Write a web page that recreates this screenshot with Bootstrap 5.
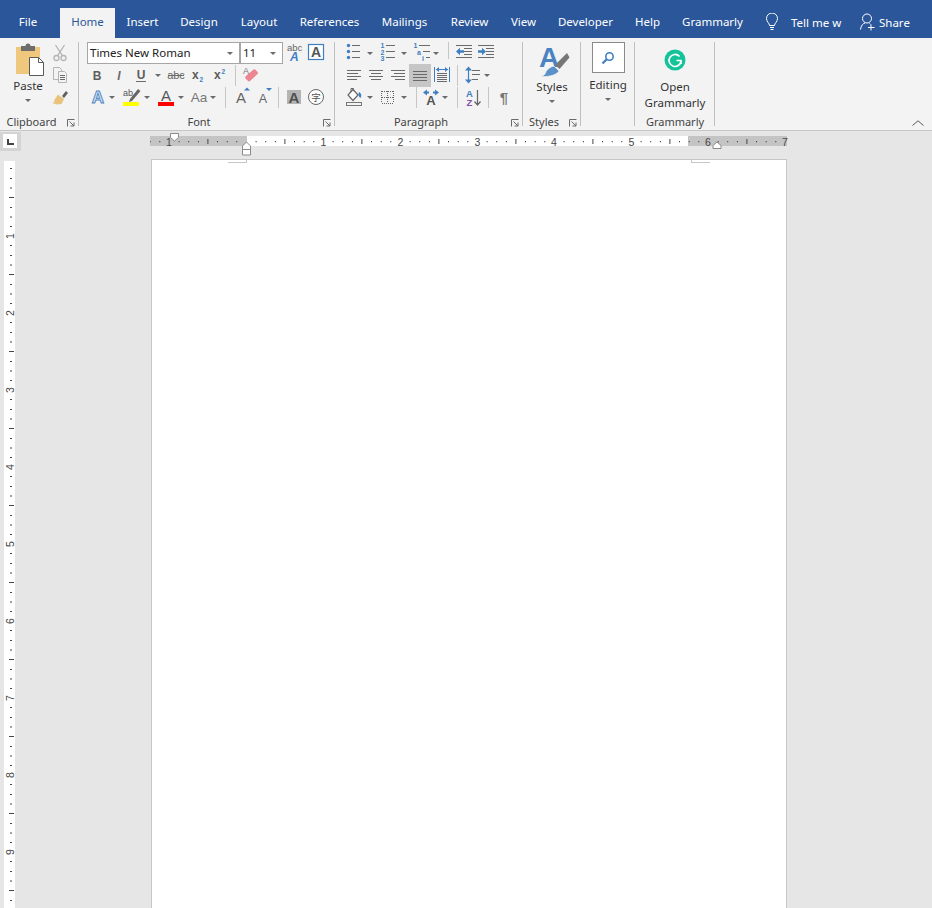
<!DOCTYPE html>
<html lang="en">
<head>
<meta charset="utf-8">
<title>Word</title>
<link href="https://cdn.jsdelivr.net/npm/bootstrap@5.3.0/dist/css/bootstrap.min.css" rel="stylesheet">
<style>
html,body{height:908px;overflow:hidden}
body{font-family:"Noto Sans","Liberation Sans",sans-serif;font-size:11.5px;color:#444;background:#e6e6e6}
svg{display:block;flex:none}
svg text{font-family:"Liberation Sans",sans-serif}
.titlebar{height:38px;background:#2b579a;color:#fff;align-items:flex-end}
.titlebar .nav-link{padding:0;height:30px;line-height:28px;text-align:center;color:#fff;font-size:11.5px}
.titlebar .nav-link.active{background:#f3f3f3;color:#2b579a}
.t-file{width:56px;margin-right:4px}.t-home{width:55px}.t-insert{width:55px}.t-design{width:58px}.t-layout{width:62px}.t-refs{width:79px}.t-mail{width:71px}.t-review{width:59px}.t-view{width:49px}.t-dev{width:75px}.t-help{width:49px}.t-gram{width:81px}
.tb-tools{height:30px;margin-left:12px;color:#fff;line-height:28px}
.tb-bulb,.tb-user{margin-top:-2px}
.tb-tell{margin-left:12px;width:49px;white-space:nowrap}
.tb-user{margin-left:20px}
.tb-share{margin-left:4px}
.ribbon{height:93px;padding-top:4px;background:#f3f3f3;border-bottom:1px solid #c6c6c6}
.grp{height:88px;flex:none;background:linear-gradient(#c0c0c0,#c0c0c0) right top/1px 84px no-repeat}
.g-clip{width:79px}.g-font{width:256px;padding-left:7px}.g-para{width:188px;padding-left:8px}.g-styles{width:58px}.g-edit{width:54px}.g-gram{width:80px}
.g-font .glabel{margin-left:-7px}.g-para .glabel{margin-left:-8px}
.body-area{height:70px}
.glabel{height:15px;line-height:14px;flex:none;font-size:11px}
.launch{width:16px;flex:none}
.rrow{height:22px;flex:none}
.cl{height:22px;flex:none;display:flex;align-items:center;justify-content:center}
.c22{width:22px}.c14{width:14px}.c12{width:12px}.c10{width:10px}.c8{width:8px}.c6{width:6px}
.ml1{margin-left:1px}.ml2{margin-left:2px}.ml3{margin-left:3px}.ml4{margin-left:4px}.ml5{margin-left:5px}.ml6{margin-left:6px}.ml9{margin-left:9px}
.dd{width:0;height:0;border:solid transparent;border-width:3px 3px 0;border-top-color:#6a6a6a;flex:none}
.vsep{width:1px;flex:none;background:#c6c6c6;margin-top:1px;height:21px}
.vsep-s{height:17px;margin-top:0;align-self:flex-start}
.is22{width:22px;height:22px}
.ln{stroke:#6a6a6a;stroke-width:1;fill:none;shape-rendering:crispEdges}
.combo{height:22px;background:#fff;border:1px solid #a6a6a6;font-size:11.5px;color:#222;line-height:20px;padding:0 6px 0 2px;flex:none;margin-top:0}
.combo-name{width:153px;margin-left:1px}
.combo-size{width:43px}
.hl{background:#c6c6c6;height:23px;align-self:flex-start}
.paste-col{width:42px;margin-left:7px}
.btn-text{line-height:16px;color:#333;font-size:11.5px}
.bt-paste{margin-top:1px}
.dd-big{margin-top:5px}
.editbox{width:33px;height:31px;background:#fff;border:1px solid #8a8a8a}
.workspace{height:777px;overflow:hidden;background:#e6e6e6}
.rulerrow{height:28px}
.tabsel{width:21px;height:19px;margin-top:1px;background:#d4d4d4;flex:none;padding:2px 4px 2px 3px}
.tabsel-in{width:14px;height:14px;background:#fff;padding:5px 0 0 4px}
.hruler{margin-left:129px}
.vruler{margin-left:4px}
.page{margin-left:136px;width:636px;height:760px;background:#fff;border:1px solid #c6c6c6;border-bottom:0;flex:none}
.crop-l{margin-left:76px;width:19px;height:3px;border:solid #c6c6c6;border-width:0 1px 1px 0}
.crop-r{margin-right:76px;width:19px;height:3px;border:solid #c6c6c6;border-width:0 0 1px 1px}
.collapse-ch{margin:0 8px 4px auto;align-self:flex-end}
</style>
</head>
<body>
<div class="d-flex flex-column">
  <div class="titlebar d-flex">
    <ul class="nav flex-nowrap">
      <li class="nav-item"><a class="nav-link t-file" href="#">File</a></li>
      <li class="nav-item"><a class="nav-link active t-home" href="#">Home</a></li>
      <li class="nav-item"><a class="nav-link t-insert" href="#">Insert</a></li>
      <li class="nav-item"><a class="nav-link t-design" href="#">Design</a></li>
      <li class="nav-item"><a class="nav-link t-layout" href="#">Layout</a></li>
      <li class="nav-item"><a class="nav-link t-refs" href="#">References</a></li>
      <li class="nav-item"><a class="nav-link t-mail" href="#">Mailings</a></li>
      <li class="nav-item"><a class="nav-link t-review" href="#">Review</a></li>
      <li class="nav-item"><a class="nav-link t-view" href="#">View</a></li>
      <li class="nav-item"><a class="nav-link t-dev" href="#">Developer</a></li>
      <li class="nav-item"><a class="nav-link t-help" href="#">Help</a></li>
      <li class="nav-item"><a class="nav-link t-gram" href="#">Grammarly</a></li>
    </ul>
    <div class="tb-tools d-flex align-items-center">
      <svg class="tb-bulb" width="14" height="18" viewBox="0 0 14 18"><path d="M4.5 12.5C4.5 10 1.5 9 1.5 5.5a5.5 5.5 0 0 1 11 0C12.500 9 9.500 10 9.500 12.500ZM5 14.500h4M5.500 16.500h3" fill="none" stroke="#fff" stroke-width="1"/></svg>
      <span class="tb-tell">Tell me w</span>
      <svg class="tb-user" width="15" height="18" viewBox="0 0 15 18"><circle cx="7" cy="5.500" r="4.500" fill="none" stroke="#fff"/><path d="M.5 16.500C1 12.500 3 10.500 5 10M9.500 10.500l1 .8M11 11.500v6M8 14.500h6.500" fill="none" stroke="#fff"/></svg>
      <span class="tb-share">Share</span>
    </div>
  </div>

  <div class="ribbon d-flex">
    <!-- Clipboard -->
    <section class="grp g-clip d-flex flex-column">
      <div class="body-area d-flex flex-grow-1">
        <div class="paste-col d-flex flex-column align-items-center">
          <svg width="32" height="35" viewBox="-2 0 32 35"><rect x="2" y="5" width="24" height="27" fill="#efc77d"/><path d="M7 4h4.500a2.500 2.500 0 0 1 5 0H21v5H7Z" fill="#6d6d6d"/><path d="M15.500 15.500h9l5 5v13h-14Z" fill="#fff" stroke="#5a5a5a"/><path d="M24.500 15.500v5h5" fill="none" stroke="#5a5a5a"/></svg>
          <span class="btn-text bt-paste">Paste</span>
          <span class="dd dd-big"></span>
        </div>
        <div class="d-flex flex-column">
          <div class="cl c22"><svg width="18" height="18" viewBox="0 0 18 18"><g fill="none" stroke="#b4b4b4" stroke-width="1.300"><circle cx="5.500" cy="14" r="2.500"/><circle cx="12.500" cy="14" r="2.500"/><path d="M6.500 11.800 13.500 1M11.500 11.800 4.500 1"/></g></svg></div>
          <div class="cl c22"><svg width="18" height="18" viewBox="0 0 18 18"><g fill="#f3f3f3" stroke="#b4b4b4"><path d="M2.500 1.500h6l2 2v10h-8Z"/><path d="M7.500 5.500h6l2 2v9h-8Z"/></g><path class="ln" d="M9 9.500h5M9 11.500h5M9 13.500h5"/></svg></div>
          <div class="cl c22"><svg width="18" height="18" viewBox="0 0 18 18"><path d="M11 8 15 3l2 2-4 5Z" fill="#5f5f5f"/><path d="M7 6.500 13 11l-2.500 5-5 .5-4-1.500 3-2-2 .2Z" fill="#e9c27c"/></svg></div>
        </div>
      </div>
      <div class="glabel d-flex"><span class="flex-grow-1 text-center">Clipboard</span><span class="launch"><svg width="8" height="8" viewBox="0 0 8 8" class="mt-1 ms-1"><path d="M.5 7.500V.5h7M2.500 2.500l4.500 4.500M3.500 7h3.500V3.500" fill="none" stroke="#6a6a6a"/></svg></span></div>
    </section>

    <!-- Font -->
    <section class="grp g-font d-flex flex-column">
      <div class="body-area flex-grow-1">
        <div class="rrow d-flex">
          <div class="combo combo-name d-flex align-items-center justify-content-between"><span>Times New Roman</span><span class="dd"></span></div>
          <div class="combo combo-size d-flex align-items-center justify-content-between"><span>11</span><span class="dd"></span></div>
          <div class="cl c22"><svg class="is22" viewBox="0 0 22 22"><text x="4" y="9" font-size="9.500" fill="#666">abc</text><text x="7" y="18.500" font-size="12" font-weight="700" font-style="italic" fill="#3f7fc1">A</text></svg></div>
          <div class="cl c22"><svg class="is22" viewBox="0 0 22 22"><rect x="3.500" y="2.500" width="15" height="15" fill="#fff" stroke="#3f7fc1" stroke-width="1.200"/><text x="11" y="15" font-size="14" font-weight="700" fill="#555" text-anchor="middle">A</text></svg></div>
        </div>
        <div class="rrow d-flex">
          <div class="cl c22"><svg class="is22" viewBox="0 0 22 22"><text x="11" y="15.500" font-size="12" font-weight="700" fill="#5c5c5c" text-anchor="middle">B</text></svg></div>
          <div class="cl c22"><svg class="is22" viewBox="0 0 22 22"><text x="11" y="15.500" font-size="12" font-style="italic" font-weight="700" fill="#6c6c6c" text-anchor="middle">I</text></svg></div>
          <div class="cl c22"><svg class="is22" viewBox="0 0 22 22"><text x="11" y="14.500" font-size="12" font-weight="700" fill="#5c5c5c" text-anchor="middle">U</text><path class="ln" d="M6 17.500h10"/></svg></div>
          <div class="cl c12"><span class="dd"></span></div>
          <div class="cl c22 ml1"><svg class="is22" viewBox="0 0 22 22"><text x="11" y="15" font-size="11" fill="#666" text-anchor="middle">abc</text><path class="ln" d="M3 11.500h16"/></svg></div>
          <div class="cl c22"><svg class="is22" viewBox="0 0 22 22"><text x="5" y="15" font-size="12" font-weight="700" fill="#5c5c5c">x</text><text x="12.500" y="18" font-size="6.500" font-weight="700" fill="#3f7fc1">2</text></svg></div>
          <div class="cl c22"><svg class="is22" viewBox="0 0 22 22"><text x="5" y="15" font-size="12" font-weight="700" fill="#5c5c5c">x</text><text x="12.500" y="9.500" font-size="6.500" font-weight="700" fill="#3f7fc1">2</text></svg></div>
          <span class="vsep ml4"></span>
          <div class="cl c22 ml3"><svg class="is22" viewBox="0 0 22 22"><text x="4" y="10" font-size="9" fill="#777">A</text><path d="M7 12 14.500 5.500a1.500 1.500 0 0 1 2 .2l2 2.300a1.500 1.500 0 0 1 0 2L11 17a1.500 1.500 0 0 1-2 0L7 15a2 2 0 0 1 0-3Z" fill="#ea8591"/></svg></div>
        </div>
        <div class="rrow d-flex">
          <div class="cl c22 ml1"><svg class="is22" viewBox="0 0 22 22"><text x="11" y="17" font-size="17" font-weight="700" fill="#dbe8f5" stroke="#4a83c2" stroke-width=".9" text-anchor="middle">A</text></svg></div>
          <div class="cl c6"><span class="dd"></span></div>
          <div class="cl c22 ml5"><svg class="is22" viewBox="0 0 22 22"><text x="3" y="10" font-size="9" fill="#555">ab</text><path d="M10 13 18 3l2.500 2L12 15l-3 1Z" fill="#666"/><rect x="3" y="16" width="16" height="4" fill="#ffff00"/></svg></div>
          <div class="cl c10"><span class="dd"></span></div>
          <div class="cl c22 ml3"><svg class="is22" viewBox="0 0 22 22"><text x="11" y="15" font-size="15" fill="#555" text-anchor="middle">A</text><rect x="3" y="16" width="16" height="4" fill="#f00"/></svg></div>
          <div class="cl c8"><span class="dd"></span></div>
          <div class="cl c22 ml3"><svg class="is22" viewBox="0 0 22 22"><text x="11" y="16" font-size="13.500" fill="#777" text-anchor="middle">Aa</text></svg></div>
          <div class="cl c6"><span class="dd"></span></div>
          <span class="vsep ml9"></span>
          <div class="cl c22 ml5"><svg class="is22" viewBox="0 0 22 22"><text x="10" y="17" font-size="15" fill="#666" text-anchor="middle">A</text><path d="M13 4.500h6L16 1.500Z" fill="#3f7fc1"/></svg></div>
          <div class="cl c22"><svg class="is22" viewBox="0 0 22 22"><text x="10" y="17" font-size="12.500" fill="#666" text-anchor="middle">A</text><path d="M13 2h6L16 5Z" fill="#3f7fc1"/></svg></div>
          <span class="vsep ml3"></span>
          <div class="cl c22 ml4"><svg class="is22" viewBox="0 0 22 22"><rect x="4" y="4" width="14" height="14" fill="#b4b4b4"/><text x="11" y="16.500" font-size="15" font-weight="700" fill="#505050" text-anchor="middle">A</text></svg></div>
          <div class="cl c22"><svg class="is22" viewBox="0 0 22 22"><circle cx="11" cy="11" r="7.500" fill="#fff" stroke="#666"/><text x="11" y="14.500" style="font-family:'Noto Sans CJK SC',sans-serif" font-size="9.500" fill="#555" text-anchor="middle">字</text></svg></div>
        </div>
      </div>
      <div class="glabel d-flex"><span class="flex-grow-1 text-center">Font</span><span class="launch"><svg width="8" height="8" viewBox="0 0 8 8" class="mt-1 ms-1"><path d="M.5 7.500V.5h7M2.500 2.500l4.500 4.500M3.500 7h3.500V3.500" fill="none" stroke="#6a6a6a"/></svg></span></div>
    </section>

    <!-- Paragraph -->
    <section class="grp g-para d-flex flex-column">
      <div class="body-area flex-grow-1">
        <div class="rrow d-flex">
          <div class="cl c22"><svg class="is22" viewBox="0 0 22 22"><g fill="#3f7fc1"><circle cx="5.500" cy="3.500" r="1.700"/><circle cx="5.500" cy="9.500" r="1.700"/><circle cx="5.500" cy="15.500" r="1.700"/></g><path class="ln" d="M9 3.500h8M9 9.500h8M9 15.500h8"/></svg></div>
          <div class="cl c10"><span class="dd"></span></div>
          <div class="cl c22 ml2"><svg class="is22" viewBox="0 0 22 22"><g font-size="7" font-weight="700" fill="#3f7fc1" text-anchor="middle"><text x="5.500" y="6">1</text><text x="5.500" y="12.500">2</text><text x="5.500" y="19">3</text></g><path class="ln" d="M9 3.500h9M9 9.500h9M9 15.500h9"/></svg></div>
          <div class="cl c10"><span class="dd"></span></div>
          <div class="cl c22 ml2"><svg class="is22" viewBox="0 0 22 22"><g font-size="7" font-weight="700" fill="#3f7fc1" text-anchor="middle"><text x="4.500" y="6">1</text><text x="8" y="12.500">a</text><text x="12" y="19">i</text></g><path class="ln" d="M8 3.500h11M12 9.500h7M15 15.500h4"/></svg></div>
          <div class="cl c6"><span class="dd"></span></div>
          <span class="vsep vsep-s ml9"></span>
          <div class="cl c22 ml4"><svg class="is22" viewBox="0 0 22 22"><path class="ln" d="M3 3.500h16M11 6.500h8M11 9.500h8M11 12.500h8M3 15.500h16"/><path d="M3 9.500 7 5.800v2.500h4v2.500H7v2.500Z" fill="#3f7fc1"/></svg></div>
          <div class="cl c22"><svg class="is22" viewBox="0 0 22 22"><path class="ln" d="M3 3.500h16M11 6.500h8M11 9.500h8M11 12.500h8M3 15.500h16"/><path d="M11 9.500 7 5.800v2.500H3v2.500h4v2.500Z" fill="#3f7fc1"/></svg></div>
        </div>
        <div class="rrow d-flex">
          <div class="cl c22"><svg class="is22" viewBox="0 0 22 22"><path class="ln" d="M4 6.500h14M4 9.500h11M4 12.500h14M4 15.500h10"/></svg></div>
          <div class="cl c22"><svg class="is22" viewBox="0 0 22 22"><path class="ln" d="M4 6.500h14M6 9.500h10M4 12.500h14M6 15.500h10"/></svg></div>
          <div class="cl c22"><svg class="is22" viewBox="0 0 22 22"><path class="ln" d="M4 6.500h14M7 9.500h11M4 12.500h14M8 15.500h10"/></svg></div>
          <div class="cl c22 hl"><svg class="is22" viewBox="0 0 22 22"><path class="ln" d="M4 6.500h14M4 9.500h14M4 12.500h14M4 15.500h14"/></svg></div>
          <div class="cl c22"><svg class="is22" viewBox="0 0 22 22"><path d="M3.500 3v15M18.500 3v15" stroke="#3f7fc1" fill="none"/><path d="M5 5.500h12" stroke="#3f7fc1" fill="none"/><path d="M5 5.500 8 3v5ZM17 5.500 14 3v5Z" fill="#3f7fc1"/><path class="ln" d="M6 9.500h10M6 11.500h10M6 13.500h10M6 15.500h10M6 17.500h10"/></svg></div>
          <span class="vsep ml4"></span>
          <div class="cl c22"><svg class="is22" viewBox="0 0 22 22"><path d="M10.500 5v12" stroke="#3f7fc1" stroke-width="1.200"/><path d="M10.500 2.500 14 6.500H7ZM10.500 19.500 14 15.500H7Z" fill="#3f7fc1"/><path class="ln" d="M14 6.500h8M14 10.500h8M14 15.500h6"/></svg></div>
          <div class="cl c14"><span class="dd"></span></div>
        </div>
        <div class="rrow d-flex">
          <div class="cl c22"><svg class="is22" viewBox="0 0 22 22"><path d="M10 3.500 15 9l-5 5.500L5 9Z" fill="#fff" stroke="#666" stroke-width="1.200"/><path d="M8 6V2.500h2.500V5" fill="none" stroke="#666"/><path d="M16 6c2.500 1.500 3 3.500 1.500 6-1.300-1-2.500-2.500-2-4.500Z" fill="#3f7fc1"/><rect x="3.500" y="16.500" width="15" height="3" fill="#f3f3f3" stroke="#777"/></svg></div>
          <div class="cl c10"><span class="dd"></span></div>
          <div class="cl c22 ml1"><svg class="is22" viewBox="0 0 22 22"><path d="M5.500 5h12M5.500 11h12M5.500 17h12M5.500 5v12M11.500 5v12M17.500 5v12" fill="none" stroke="#666" stroke-dasharray="1 1" shape-rendering="crispEdges"/></svg></div>
          <div class="cl c12"><span class="dd"></span></div>
          <span class="vsep ml6"></span>
          <div class="cl c22 ml3"><svg class="is22" viewBox="0 0 22 22"><text x="11" y="18.500" font-size="13" font-weight="700" fill="#555" text-anchor="middle">A</text><path d="M3 6.500 7 3.500v2h2v2H7v2ZM19 6.500l-4-3v2h-2v2h2v2Z" fill="#3f7fc1"/></svg></div>
          <div class="cl c6"><span class="dd"></span></div>
          <span class="vsep ml9"></span>
          <div class="cl c22 ml5"><svg class="is22" viewBox="0 0 22 22"><text x="6.500" y="11" font-size="9.500" font-weight="700" fill="#3f7fc1" text-anchor="middle">A</text><text x="6.500" y="19.500" font-size="9.500" font-weight="700" fill="#8a4fb0" text-anchor="middle">Z</text><path d="M14.500 4v15M11.500 15.500l3 3.500 3-3.500" fill="none" stroke="#666" stroke-width="1.200"/></svg></div>
          <span class="vsep ml3"></span>
          <div class="cl c22 ml4"><svg class="is22" viewBox="0 0 22 22"><text x="11" y="17" font-size="15" font-weight="700" fill="#777" text-anchor="middle">¶</text></svg></div>
        </div>
      </div>
      <div class="glabel d-flex"><span class="flex-grow-1 text-center">Paragraph</span><span class="launch"><svg width="8" height="8" viewBox="0 0 8 8" class="mt-1 ms-1"><path d="M.5 7.500V.5h7M2.500 2.500l4.500 4.500M3.500 7h3.500V3.500" fill="none" stroke="#6a6a6a"/></svg></span></div>
    </section>

    <!-- Styles -->
    <section class="grp g-styles d-flex flex-column">
      <div class="body-area flex-grow-1 d-flex flex-column align-items-center">
        <svg width="36" height="37" viewBox="0 0 36 37"><text x="15" y="25" font-size="28" font-weight="700" fill="#4a83c2" text-anchor="middle">A</text><path d="M33 11l2.500 4.500L25.500 27 21 23Z" fill="#777"/><path d="M20 24l5 5c-2 3.500-9 6-18 5.500 3.500-1.500 4.500-2.500 5-5 1.500-2.500 5-5 8-5.500Z" fill="#5b90c8" stroke="#f3f3f3" stroke-width=".7"/></svg>
        <span class="btn-text">Styles</span>
        <span class="dd dd-big"></span>
      </div>
      <div class="glabel d-flex"><span class="flex-grow-1 text-center">Styles</span><span class="launch"><svg width="8" height="8" viewBox="0 0 8 8" class="mt-1 ms-1"><path d="M.5 7.500V.5h7M2.500 2.500l4.500 4.500M3.500 7h3.500V3.500" fill="none" stroke="#6a6a6a"/></svg></span></div>
    </section>

    <!-- Editing -->
    <section class="grp g-edit d-flex flex-column">
      <div class="body-area flex-grow-1 d-flex flex-column align-items-center">
        <div class="editbox d-flex align-items-center justify-content-center"><svg width="14" height="14" viewBox="0 0 14 14"><circle cx="8.500" cy="5.500" r="3.700" fill="none" stroke="#3f7fc1" stroke-width="1.600"/><path d="M5.700 8.300 1.500 12.500" stroke="#3f7fc1" stroke-width="2.200"/></svg></div>
        <span class="btn-text mt-1">Editing</span>
        <span class="dd dd-big"></span>
      </div>
    </section>

    <!-- Grammarly -->
    <section class="grp g-gram d-flex flex-column">
      <div class="body-area flex-grow-1 d-flex flex-column align-items-center">
        <svg class="mt-1" width="24" height="29" viewBox="0 0 24 29"><circle cx="12" cy="14" r="10.500" fill="#15c39a"/><path d="M16.500 10.500A6 6 0 1 0 18 14.500h-4.500M18 14.500v3.500" fill="none" stroke="#fff" stroke-width="1.700"/></svg>
        <span class="btn-text text-center mt-1">Open<br>Grammarly</span>
      </div>
      <div class="glabel text-center">Grammarly</div>
    </section>

    <div class="collapse-ch"><svg width="12" height="6" viewBox="0 0 12 6"><path d="M.5 5.500 6 .8l5.500 4.700" fill="none" stroke="#555"/></svg></div>
  </div>

  <main class="workspace">
    <div class="rulerrow d-flex">
      <div class="tabsel"><div class="tabsel-in"><svg width="7" height="6" viewBox="0 0 7 6"><path d="M1 0v5h6" fill="none" stroke="#444" stroke-width="2"/></svg></div></div>
      <svg class="hruler" width="650" height="28" viewBox="150 131 650 28">
        <defs>
          <pattern id="tk" patternUnits="userSpaceOnUse" x="246" y="136" width="77" height="10">
            <g fill="#444"><rect x="9.600" y="5" width="1" height="1.300"/><rect x="19.200" y="5" width="1" height="1.300"/><rect x="28.900" y="5" width="1" height="1.300"/><rect x="38.400" y="3" width="1" height="5"/><rect x="48" y="5" width="1" height="1.300"/><rect x="57.700" y="5" width="1" height="1.300"/><rect x="67.300" y="5" width="1" height="1.300"/></g>
          </pattern>
        </defs>
        <rect x="150" y="136" width="637" height="10" fill="#c4c4c4"/>
        <rect x="247" y="136" width="441" height="10" fill="#fff"/>
        <rect x="150" y="136" width="637" height="10" fill="url(#tk)"/>
        <g font-size="10.500" fill="#444" text-anchor="middle">
          <text x="169" y="145.500">1</text><text x="323.500" y="145.500">1</text><text x="400.500" y="145.500">2</text><text x="477.500" y="145.500">3</text><text x="554" y="145.500">4</text><text x="631.500" y="145.500">5</text><text x="708" y="145.500">6</text><text x="785" y="145.500">7</text>
        </g>
        <path d="M170.500 133.500h8v4l-4 3.500-4-3.500Z" fill="#fff" stroke="#8a8a8a"/>
        <path d="M242.500 149.500v-3.500l4-4 4 4v3.500Zm0 0h8v5.500h-8Z" fill="#fff" stroke="#8a8a8a"/>
        <path d="M713 148.500v-3l4-3.500 4 3.500v3Z" fill="#fff" stroke="#8a8a8a"/>
      </svg>
    </div>
    <div class="d-flex">
      <svg class="vruler" width="11" height="749" viewBox="4 159 11 749">
        <defs>
          <pattern id="tv" patternUnits="userSpaceOnUse" x="4" y="159" width="11" height="77">
            <g fill="#444"><rect x="6" y="9" width="2" height="1"/><rect x="6" y="19" width="2" height="1"/><rect x="6" y="28.500" width="2" height="1"/><rect x="5" y="38" width="5" height="1"/><rect x="6" y="48" width="2" height="1"/><rect x="6" y="57.500" width="2" height="1"/><rect x="6" y="67" width="2" height="1"/></g>
          </pattern>
        </defs>
        <rect x="4" y="161" width="11" height="747" fill="#fff"/>
        <rect x="4" y="161" width="11" height="747" fill="url(#tv)"/>
        <g font-size="10.500" fill="#444" text-anchor="middle">
          <text transform="translate(14 236) rotate(-90)">1</text><text transform="translate(14 313) rotate(-90)">2</text><text transform="translate(14 390) rotate(-90)">3</text><text transform="translate(14 467) rotate(-90)">4</text><text transform="translate(14 544) rotate(-90)">5</text><text transform="translate(14 621) rotate(-90)">6</text><text transform="translate(14 698) rotate(-90)">7</text><text transform="translate(14 775) rotate(-90)">8</text><text transform="translate(14 852) rotate(-90)">9</text>
        </g>
      </svg>
      <div class="page d-flex justify-content-between">
        <div class="crop-l"></div><div class="crop-r"></div>
      </div>
    </div>
  </main>
</div>
</body>
</html>
